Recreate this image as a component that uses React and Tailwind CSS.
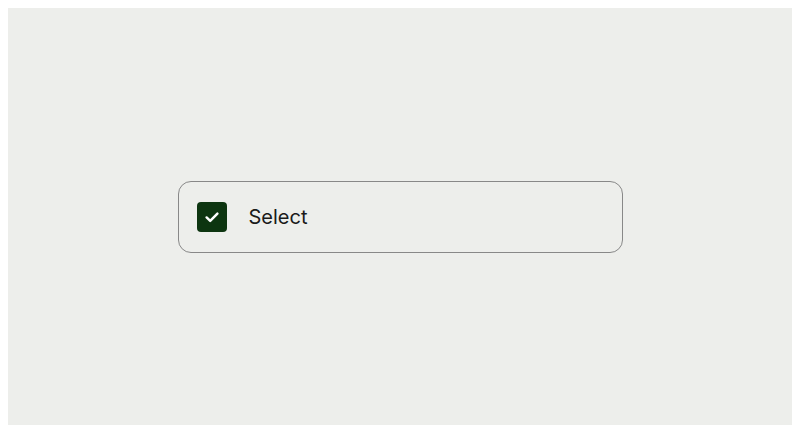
export default function App() {
  return (
    <div className="w-[800px] h-[433px] bg-white p-2">
      <div className="w-full h-[417px] bg-[#edeeeb] flex items-center justify-center">
        <label className="w-[445px] h-[72px] rounded-[13px] border-[1.5px] border-[#888888] flex items-center pl-[18px] gap-[22px] cursor-pointer">
          <span className="w-[30px] h-[30px] rounded-[4px] bg-[#0d3510] flex items-center justify-center">
            <svg width="18" height="18" viewBox="0 0 16 16" fill="none">
              <path d="M3.2 8.4 L6.4 11.4 L12.8 5" stroke="#ffffff" strokeWidth="2.2" strokeLinecap="round" strokeLinejoin="round" />
            </svg>
          </span>
          <span className="text-[20px] text-[#1a1a1a] font-['Inter',sans-serif] leading-none">Select</span>
        </label>
      </div>
    </div>
  );
}
